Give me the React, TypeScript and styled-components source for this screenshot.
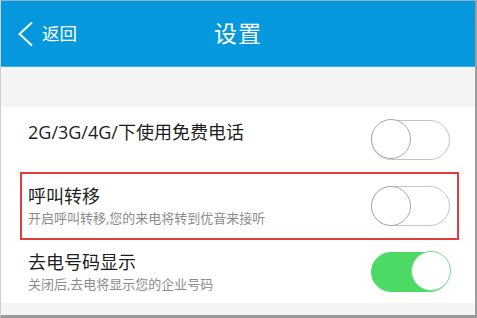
import React, { useState } from 'react';
import styled, { createGlobalStyle } from 'styled-components';

const GlobalStyle = createGlobalStyle`
  html, body {
    margin: 0;
    padding: 0;
    background: #fff;
  }
  body {
    font-family: "Open Sans", "Noto Sans CJK SC", "Liberation Sans", sans-serif;
  }
`;

const Frame = styled.div`
  width: 477px;
  height: 318px;
  box-sizing: border-box;
  border-top: 1px solid #8fb3c9;
  border-left: 1px solid #cfcfcf;
  border-right: 2px solid #9c9c9c;
  border-bottom: 3px solid #9a9a9a;
  background: #f4f4f4;
  display: flex;
  flex-direction: column;
  overflow: hidden;
`;

const Header = styled.header`
  height: 65px;
  flex-shrink: 0;
  background: #0598dc;
  border-bottom: 1px solid #3fb0e6;
  display: grid;
  grid-template-columns: 1fr auto 1fr;
  align-items: center;
  color: #fff;
`;

const Back = styled.div`
  display: flex;
  align-items: center;
  gap: 8px;
  padding-left: 16px;
  font-size: 17.5px;
  line-height: 1;
  svg {
    display: block;
  }
`;

const Title = styled.h1`
  margin: 0;
  font-size: 23px;
  font-weight: 400;
  letter-spacing: 1px;
  line-height: 1;
`;

const Spacer = styled.div`
  height: 40px;
  flex-shrink: 0;
`;

const List = styled.div`
  background: #fff;
  display: flex;
  flex-direction: column;
`;

const Row = styled.div<{ $h: number }>`
  position: relative;
  height: ${p => p.$h}px;
  display: flex;
  align-items: center;
  justify-content: space-between;
  padding: 0 25px 0 27px;
`;

const Texts = styled.div<{ $lift?: number }>`
  display: flex;
  flex-direction: column;
  padding-bottom: ${p => p.$lift ?? 0}px;
`;

const Label = styled.div`
  font-size: 18px;
  line-height: 22px;
  color: #1e1e1e;
`;

const Hint = styled.div`
  font-size: 13px;
  line-height: 18px;
  color: #8c8c8c;
  margin-top: 2px;
`;

const Highlight = styled.div`
  position: absolute;
  left: 19px;
  right: 16px;
  top: 0;
  bottom: 0;
  border: 2px solid #e23b3b;
  pointer-events: none;
`;

const Track = styled.button<{ $on: boolean }>`
  position: relative;
  width: 79px;
  height: 40px;
  padding: 0;
  border-radius: 20px;
  box-sizing: border-box;
  border: 1.5px solid ${p => (p.$on ? '#4cd964' : '#c4c4c4')};
  background: ${p => (p.$on ? '#4cd964' : '#fff')};
  cursor: pointer;
  flex-shrink: 0;
`;

const Knob = styled.span<{ $on: boolean }>`
  position: absolute;
  top: -1.5px;
  left: ${p => (p.$on ? '38.5px' : '-1.5px')};
  width: 40px;
  height: 40px;
  box-sizing: border-box;
  border-radius: 50%;
  background: #fff;
  border: 1.5px solid ${p => (p.$on ? '#6ee285' : '#a9a9a9')};
`;

const Toggle = ({ initial }: { initial: boolean }) => {
  const [on, setOn] = useState(initial);
  return (
    <Track $on={on} onClick={() => setOn(!on)}>
      <Knob $on={on} />
    </Track>
  );
};

export default function App() {
  return (
    <>
      <GlobalStyle />
      <Frame>
        <Header>
          <Back>
            <svg width="17" height="26" viewBox="0 0 17 26">
              <polyline points="15,1.5 2.5,13 15,24.5" fill="none" stroke="#fff" strokeWidth="2" />
            </svg>
            <span>返回</span>
          </Back>
          <Title>设置</Title>
          <div />
        </Header>
        <Spacer />
        <List>
          <Row $h={65}>
            <Texts $lift={16}>
              <Label>2G/3G/4G/下使用免费电话</Label>
            </Texts>
            <Toggle initial={false} />
          </Row>
          <Row $h={68}>
            <Highlight />
            <Texts>
              <Label>呼叫转移</Label>
              <Hint>开启呼叫转移,您的来电将转到优音来接听</Hint>
            </Texts>
            <Toggle initial={false} />
          </Row>
          <Row $h={63}>
            <Texts>
              <Label>去电号码显示</Label>
              <Hint>关闭后,去电将显示您的企业号码</Hint>
            </Texts>
            <Toggle initial={true} />
          </Row>
        </List>
      </Frame>
    </>
  );
}
